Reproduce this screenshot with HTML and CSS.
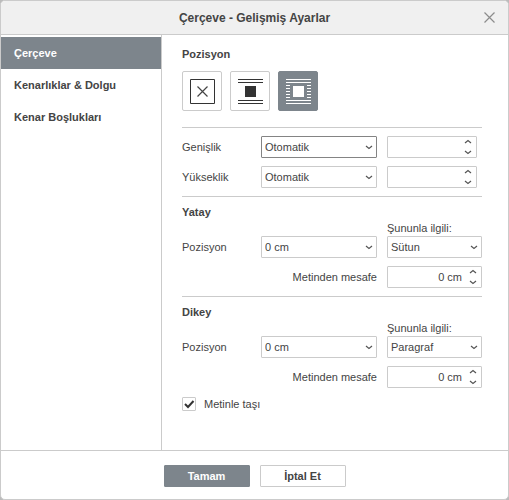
FILE: index.html
```html
<!DOCTYPE html>
<html lang="tr">
<head>
<meta charset="utf-8">
<meta name="viewport" content="width=device-width, initial-scale=1">
<title>Çerçeve - Gelişmiş Ayarlar</title>
<link rel="stylesheet" href="styles.css">
</head>
<body>
<svg class="symbols" aria-hidden="true">
  <symbol id="chevron-down" viewBox="0 0 8 6"><path d="M1 2 L4 4.5 L7 2"/></symbol>
  <symbol id="chevron-up" viewBox="0 0 8 6"><path d="M1 4 L4 1.5 L7 4"/></symbol>
</svg>
<div class="dialog" role="dialog" aria-labelledby="dialog-title">
  <header class="header">
    <h1 class="title" id="dialog-title">Çerçeve - Gelişmiş Ayarlar</h1>
    <button class="close" type="button" aria-label="Kapat">
      <svg width="11" height="11" viewBox="0 0 11 11"><path d="M0.5 0.5 L10.5 10.5 M10.5 0.5 L0.5 10.5"/></svg>
    </button>
  </header>

  <div class="body">
    <nav class="menu">
      <button class="menu-item active" type="button">Çerçeve</button>
      <button class="menu-item" type="button">Kenarlıklar &amp; Dolgu</button>
      <button class="menu-item" type="button">Kenar Boşlukları</button>
    </nav>

    <main class="panel">
      <section class="section">
        <h2 class="heading">Pozisyon</h2>
        <div class="wraps">
          <button class="wrap" type="button" aria-label="Yok">
            <svg viewBox="0 0 38 38"><path class="line" d="M7.5 7.5h24v24h-24z"/><path class="cross" d="M14.5 14.5 L24.5 24.5 M24.5 14.5 L14.5 24.5"/></svg>
          </button>
          <button class="wrap" type="button" aria-label="Satır içi">
            <svg viewBox="0 0 38 38"><path class="line" d="M7 7.5h25M7 10.5h25M7 28.5h25M7 31.5h25"/><path class="solid" d="M14 14h11v11h-11z"/></svg>
          </button>
          <button class="wrap active" type="button" aria-label="Metinle çevrili">
            <svg viewBox="0 0 38 38"><path class="line" d="M7 7.5h25M7 10.5h25M7 28.5h25M7 31.5h25M7 13.5h4M7 16.5h4M7 19.5h4M7 22.5h4M7 25.5h4M28 13.5h4M28 16.5h4M28 19.5h4M28 22.5h4M28 25.5h4"/><path class="solid" d="M14 14h11v11h-11z"/></svg>
          </button>
        </div>
      </section>

      <section class="section fields">
        <label for="width-mode">Genişlik</label>
        <div class="combo focused">
          <select id="width-mode"><option>Otomatik</option></select>
          <svg class="arrow"><use href="#chevron-down"/></svg>
        </div>
        <div class="spin short">
          <input type="text" aria-label="Genişlik değeri">
          <div class="steps">
            <button type="button" aria-label="Artır"><svg class="arrow"><use href="#chevron-up"/></svg></button>
            <button type="button" aria-label="Azalt"><svg class="arrow"><use href="#chevron-down"/></svg></button>
          </div>
        </div>
        <label for="height-mode">Yükseklik</label>
        <div class="combo">
          <select id="height-mode"><option>Otomatik</option></select>
          <svg class="arrow"><use href="#chevron-down"/></svg>
        </div>
        <div class="spin short">
          <input type="text" aria-label="Yükseklik değeri">
          <div class="steps">
            <button type="button" aria-label="Artır"><svg class="arrow"><use href="#chevron-up"/></svg></button>
            <button type="button" aria-label="Azalt"><svg class="arrow"><use href="#chevron-down"/></svg></button>
          </div>
        </div>
      </section>

      <section class="section">
        <h2 class="heading">Yatay</h2>
        <div class="fields">
          <label class="above" for="h-relative">Şununla ilgili:</label>
          <label for="h-position">Pozisyon</label>
          <div class="combo">
            <select id="h-position"><option>0 cm</option></select>
            <svg class="arrow"><use href="#chevron-down"/></svg>
          </div>
          <div class="combo">
            <select id="h-relative"><option>Sütun</option></select>
            <svg class="arrow"><use href="#chevron-down"/></svg>
          </div>
          <label class="before" for="h-distance">Metinden mesafe</label>
          <div class="spin">
            <input type="text" id="h-distance" value="0 cm">
            <div class="steps">
              <button type="button" aria-label="Artır"><svg class="arrow"><use href="#chevron-up"/></svg></button>
              <button type="button" aria-label="Azalt"><svg class="arrow"><use href="#chevron-down"/></svg></button>
            </div>
          </div>
        </div>
      </section>

      <section class="section">
        <h2 class="heading">Dikey</h2>
        <div class="fields">
          <label class="above" for="v-relative">Şununla ilgili:</label>
          <label for="v-position">Pozisyon</label>
          <div class="combo">
            <select id="v-position"><option>0 cm</option></select>
            <svg class="arrow"><use href="#chevron-down"/></svg>
          </div>
          <div class="combo">
            <select id="v-relative"><option>Paragraf</option></select>
            <svg class="arrow"><use href="#chevron-down"/></svg>
          </div>
          <label class="before" for="v-distance">Metinden mesafe</label>
          <div class="spin">
            <input type="text" id="v-distance" value="0 cm">
            <div class="steps">
              <button type="button" aria-label="Artır"><svg class="arrow"><use href="#chevron-up"/></svg></button>
              <button type="button" aria-label="Azalt"><svg class="arrow"><use href="#chevron-down"/></svg></button>
            </div>
          </div>
        </div>
        <label class="check">
          <span class="box">
            <input type="checkbox" checked>
            <svg viewBox="0 0 14 14"><path d="M3 7 L6 10 L11.5 4"/></svg>
          </span>
          Metinle taşı
        </label>
      </section>
    </main>
  </div>

  <footer class="footer">
    <button class="action primary" type="button">Tamam</button>
    <button class="action" type="button">İptal Et</button>
  </footer>
</div>
</body>
</html>
```
FILE: styles.css
```css
* {
  box-sizing: border-box;
}

body {
  margin: 0;
  background: #bbb;
  color: #444;
  font: 11px/14px "Liberation Sans", Arial, sans-serif;
}

button,
input,
select {
  margin: 0;
  padding: 0;
  border: 0;
  border-radius: 0;
  background: none;
  color: inherit;
  font: inherit;
}

svg {
  display: block;
  fill: none;
}

.symbols {
  position: absolute;
  width: 0;
  height: 0;
}

.dialog {
  display: flex;
  flex-direction: column;
  min-height: 100vh;
  border: 1px solid #cbcbcb;
  border-radius: 5px;
  background: #fff;
  overflow: hidden;
}

/* Title bar */
.header {
  display: grid;
  grid-template-columns: 38px 1fr 38px;
  align-items: center;
  height: 34px;
  border-bottom: 1px solid #cbcbcb;
  background: #f0f0f0;
}

.title {
  grid-column: 2;
  margin: 0;
  font-size: 12px;
  line-height: 16px;
  text-align: center;
}

.close {
  display: grid;
  place-items: center;
  height: 33px;
}

.close svg {
  stroke: #8c8c8c;
  stroke-width: 1.2;
}

/* Side menu */
.body {
  display: flex;
  flex: 1;
}

.menu {
  display: flex;
  flex-direction: column;
  width: 161px;
  padding-top: 2px;
  border-right: 1px solid #cbcbcb;
}

.menu-item {
  height: 32px;
  padding: 0 13px;
  font-weight: bold;
  text-align: left;
}

.menu-item.active {
  background: #7d858c;
  color: #fff;
}

/* Settings panel */
.panel {
  flex: 1;
  padding: 4px 26px 0 20px;
}

.section {
  padding: 8px 0;
}

.section + .section {
  border-top: 1px solid #cbcbcb;
}

.heading {
  margin: 0 0 2px;
  font-size: 11px;
  line-height: 14px;
}

.wraps {
  display: flex;
  gap: 8px;
  padding: 8px 0;
}

.wrap {
  width: 40px;
  height: 40px;
  border: 1px solid #cbcbcb;
  border-radius: 2px;
  color: #333;
}

.wrap.active {
  border-color: #7d858c;
  background: #7d858c;
  color: #fff;
}

.wrap .line {
  stroke: currentColor;
}

.wrap .cross {
  stroke: #444;
  stroke-width: 1.2;
}

.wrap .solid {
  fill: currentColor;
}

.fields {
  display: grid;
  grid-template-columns: 69px 1fr 95px;
  gap: 8px 10px;
  align-items: center;
}

.above {
  grid-column: 3;
  margin-bottom: -7px;
}

.before {
  grid-column: 1 / 3;
  text-align: right;
}

.combo,
.spin {
  display: grid;
  align-items: center;
  height: 22px;
  border: 1px solid #cbcbcb;
  border-radius: 1px;
  background: #fff;
}

.combo.focused {
  border-color: #848484;
}

.combo select {
  grid-area: 1 / 1;
  width: 100%;
  height: 20px;
  padding: 0 16px 0 3px;
  appearance: none;
  outline: 0;
}

.combo .arrow {
  grid-area: 1 / 1;
  justify-self: end;
  margin-right: 3px;
  pointer-events: none;
}

.arrow {
  width: 8px;
  height: 6px;
  stroke: #555;
  stroke-width: 1.2;
}

.spin {
  grid-template-columns: 1fr 16px;
}

.spin.short {
  margin-right: 5px;
}

.spin input {
  width: 100%;
  height: 20px;
  padding-right: 3px;
  text-align: right;
  outline: 0;
}

.steps {
  display: grid;
  grid-template-rows: 10px 10px;
}

.steps button {
  display: grid;
  place-items: center;
}

.check {
  display: flex;
  align-items: center;
  gap: 8px;
  margin-top: 9px;
}

.box {
  display: grid;
  width: 14px;
  height: 14px;
}

.box input {
  grid-area: 1 / 1;
  width: 14px;
  height: 14px;
  border: 1px solid #cbcbcb;
  border-radius: 1px;
  appearance: none;
}

.box svg {
  grid-area: 1 / 1;
  stroke: #333;
  stroke-width: 2;
  pointer-events: none;
}

.box input:not(:checked) + svg {
  visibility: hidden;
}

/* Action bar */
.footer {
  display: flex;
  justify-content: center;
  gap: 10px;
  padding: 14px 0 12px;
  border-top: 1px solid #cbcbcb;
}

.action {
  width: 86px;
  height: 22px;
  border: 1px solid #cbcbcb;
  border-radius: 1px;
  font-weight: bold;
}

.action.primary {
  border-color: #7d858c;
  background: #7d858c;
  color: #fff;
}
```
